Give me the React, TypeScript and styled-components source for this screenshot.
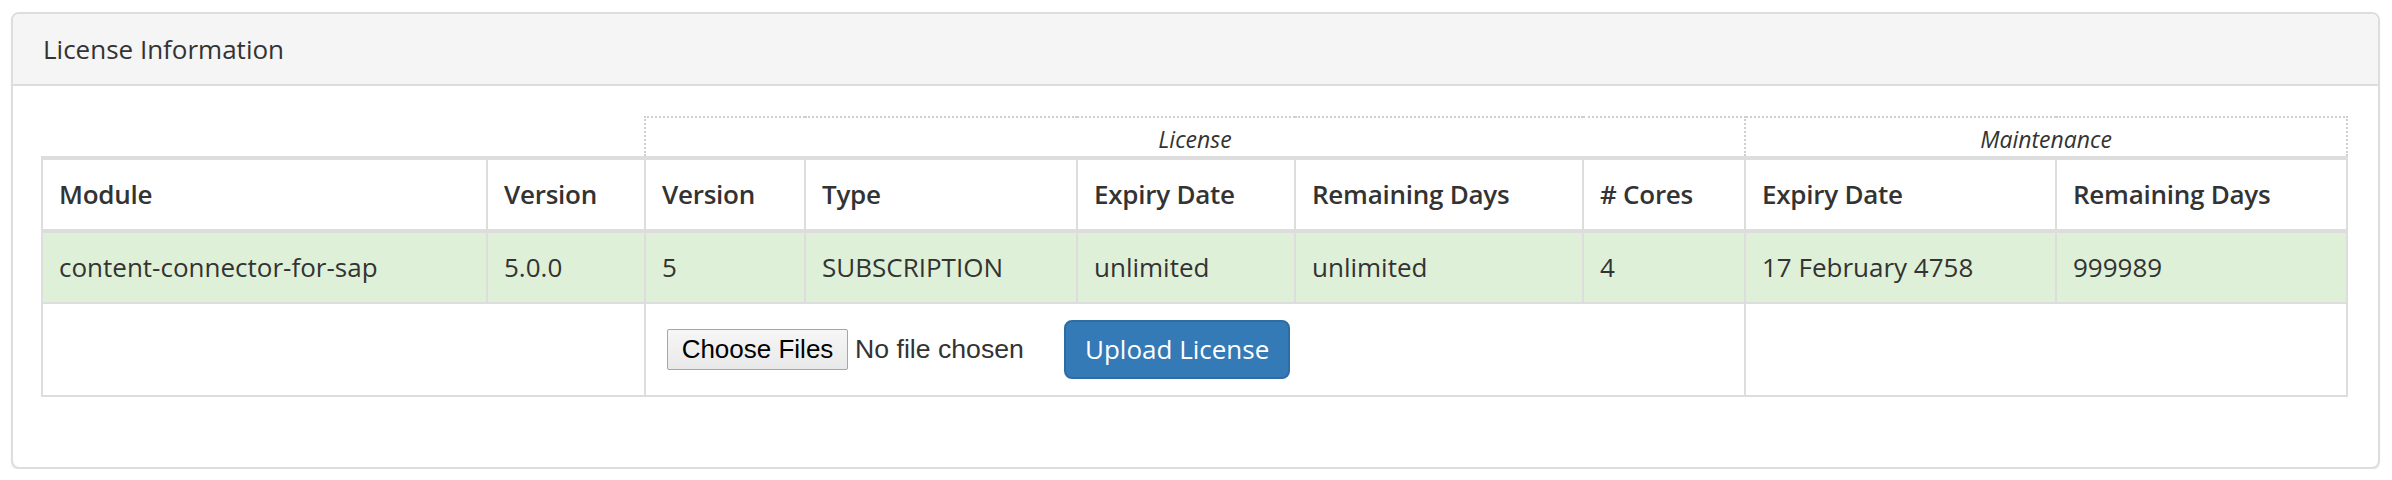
// License information panel
// module table with license / maintenance groups and upload row

import * as React from 'react'
import styled, { createGlobalStyle } from 'styled-components'

const GlobalStyle = createGlobalStyle`
  html, body {
    margin: 0;
    padding: 0;
    background: #fff;
  }
  body {
    font-family: "Open Sans", "Liberation Sans", Arial, sans-serif;
    font-size: 26px;
    line-height: 37px;
    color: #333;
  }
`

const COLS = [445, 158, 160, 272, 218, 288, 162, 311, 291]

const Panel = styled.section`
  margin: 12px 12px 0 11px;
  width: 2369px;
  box-sizing: border-box;
  border: 2px solid #ddd;
  border-radius: 8px;
  background: #fff;
  box-shadow: 0 2px 2px rgba(0, 0, 0, 0.05);
`

const Heading = styled.div`
  padding: 20px 30px;
  background: #f5f5f5;
  border-bottom: 2px solid #ddd;
  border-radius: 6px 6px 0 0;
`

const Title = styled.h3`
  margin: 0;
  font-size: 26px;
  font-weight: 400;
  line-height: 30px;
  color: #333;
`

const Body = styled.div`
  padding: 30px 30px 30px 28px;
`

const Table = styled.table`
  width: 2307px;
  table-layout: fixed;
  border-collapse: collapse;
  border-spacing: 0;
  margin-bottom: 40px;
`

const GroupCell = styled.th<{ $blank?: boolean }>`
  padding: 6px 16px 2px;
  font-size: 23px;
  line-height: 30px;
  font-style: italic;
  font-weight: 400;
  text-align: center;
  vertical-align: bottom;
  border: ${p => (p.$blank ? 'none' : '2px dotted #cfcfcf')};
  border-bottom: 4px solid #ddd;
`

const HeadCell = styled.th`
  padding: 16px;
  text-align: left;
  font-weight: 600;
  letter-spacing: -0.25px;
  vertical-align: bottom;
  white-space: nowrap;
  border: 2px solid #ddd;
  border-bottom: 4px solid #ddd;
`

const Row = styled.tr<{ $success?: boolean }>`
  background: ${p => (p.$success ? '#dff0d8' : 'transparent')};
`

const Cell = styled.td`
  padding: 16px;
  vertical-align: top;
  white-space: nowrap;
  border: 2px solid #ddd;
`

const UploadForm = styled.div`
  display: flex;
  align-items: center;
  height: 59px;
`

const FileField = styled.label`
  display: flex;
  align-items: center;
  width: 393px;
  margin: 0 4px 0 5px;
  font-family: "Liberation Sans", Arial, sans-serif;
  font-size: 26.67px;
  color: #333;
  cursor: pointer;

  input {
    display: none;
  }
`

const FileButton = styled.span`
  display: inline-flex;
  align-items: center;
  justify-content: center;
  box-sizing: border-box;
  height: 41px;
  width: 181px;
  margin-right: 7px;
  border: 1px solid #a6a6a6;
  border-radius: 2px;
  background: linear-gradient(#f6f6f6, #e9e9e9);
  color: #000;
  font-size: 26px;
`

const PrimaryButton = styled.button`
  box-sizing: border-box;
  height: 59px;
  padding: 9px 19px;
  font-family: "Open Sans", "Liberation Sans", Arial, sans-serif;
  font-size: 26px;
  line-height: 37px;
  color: #fff;
  background: #337ab7;
  border: 2px solid #2e6da4;
  border-radius: 8px;
  cursor: pointer;
`

const modules = [
  {
    name: 'content-connector-for-sap',
    version: '5.0.0',
    licenseVersion: '5',
    type: 'SUBSCRIPTION',
    expiry: 'unlimited',
    remaining: 'unlimited',
    cores: '4',
    maintExpiry: '17 February 4758',
    maintRemaining: '999989',
  },
]

export default function App() {
  return (
    <>
      <GlobalStyle />
      <Panel>
        <Heading>
          <Title>License Information</Title>
        </Heading>
        <Body>
          <Table>
            <colgroup>
              {COLS.map((w, i) => (
                <col key={i} style={{ width: w }} />
              ))}
            </colgroup>
            <thead>
              <tr>
                <GroupCell $blank colSpan={2} />
                <GroupCell colSpan={5}>License</GroupCell>
                <GroupCell colSpan={2}>Maintenance</GroupCell>
              </tr>
              <tr>
                <HeadCell>Module</HeadCell>
                <HeadCell>Version</HeadCell>
                <HeadCell>Version</HeadCell>
                <HeadCell>Type</HeadCell>
                <HeadCell>Expiry Date</HeadCell>
                <HeadCell>Remaining Days</HeadCell>
                <HeadCell># Cores</HeadCell>
                <HeadCell>Expiry Date</HeadCell>
                <HeadCell>Remaining Days</HeadCell>
              </tr>
            </thead>
            <tbody>
              {modules.map(m => (
                <Row key={m.name} $success>
                  <Cell>{m.name}</Cell>
                  <Cell>{m.version}</Cell>
                  <Cell>{m.licenseVersion}</Cell>
                  <Cell>{m.type}</Cell>
                  <Cell>{m.expiry}</Cell>
                  <Cell>{m.remaining}</Cell>
                  <Cell>{m.cores}</Cell>
                  <Cell>{m.maintExpiry}</Cell>
                  <Cell>{m.maintRemaining}</Cell>
                </Row>
              ))}
              <Row>
                <Cell colSpan={2} />
                <Cell colSpan={5}>
                  <UploadForm>
                    <FileField>
                      <input type="file" multiple />
                      <FileButton>Choose Files</FileButton>
                      No file chosen
                    </FileField>
                    <PrimaryButton type="button">Upload License</PrimaryButton>
                  </UploadForm>
                </Cell>
                <Cell colSpan={2} />
              </Row>
            </tbody>
          </Table>
        </Body>
      </Panel>
    </>
  )
}
